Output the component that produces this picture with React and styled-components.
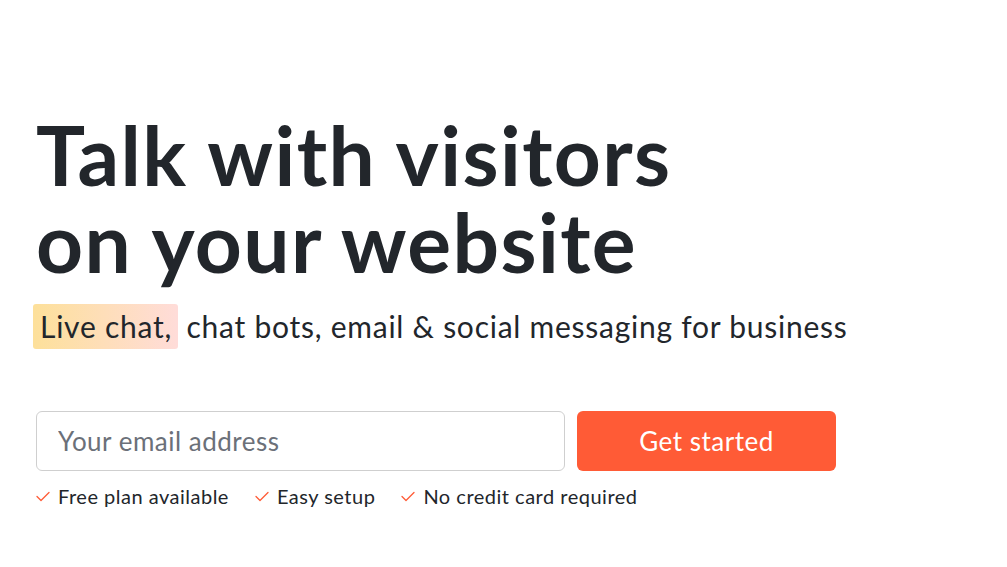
import React from "react";
import styled, { createGlobalStyle } from "styled-components";

const Global = createGlobalStyle`
  html, body { margin: 0; padding: 0; background: #fff; }
  body { font-family: "Lato", "Noto Sans", sans-serif; color: #22262b; }
`;

const Hero = styled.section`
  padding: 111px 0 0 36px;
  width: 940px;
`;

const Title = styled.h1`
  margin: 0;
  font-family: "Lato", sans-serif;
  font-weight: 700;
  font-size: 82px;
  letter-spacing: 1.4px;
  color: #22262b;
`;

const TitleLine = styled.span`
  display: block;
  height: 87px;
  line-height: 87px;
`;

const Subtitle = styled.p`
  margin: 19px 0 0 0;
  font-size: 30px;
  line-height: 45px;
  letter-spacing: 0.75px;
  color: #22262b;
  font-weight: 400;
`;

const Highlight = styled.span`
  display: inline-block;
  margin-left: -3px;
  padding: 0 6px 0 7px;
  border-radius: 3px;
  background: linear-gradient(90deg, #fde09a 0%, #ffdcd9 100%);
`;

const Form = styled.form`
  margin-top: 62px;
  display: flex;
  gap: 12px;
`;

const Input = styled.input`
  box-sizing: border-box;
  width: 529px;
  height: 60px;
  border: 1px solid #cfcfcf;
  border-radius: 6px;
  padding: 0 21px;
  font-family: "Lato", sans-serif;
  font-size: 26px;
  letter-spacing: 0.5px;
  color: #22262b;
  outline: none;
  &::placeholder { color: #6b7079; }
`;

const Button = styled.button`
  box-sizing: border-box;
  width: 259px;
  height: 60px;
  border: none;
  border-radius: 6px;
  background: #ff5b36;
  color: #fff;
  font-family: "Lato", sans-serif;
  font-size: 26px;
  letter-spacing: 0.5px;
  cursor: pointer;
`;

const Perks = styled.ul`
  list-style: none;
  margin: 13px 0 0 0;
  padding: 0;
  display: flex;
  gap: 26px;
`;

const Perk = styled.li`
  display: flex;
  align-items: center;
  gap: 8px;
  font-size: 20px;
  letter-spacing: 0.5px;
  color: #22262b;
`;

const Check = () => (
  <svg width="14" height="11" viewBox="0 0 14 11" fill="none">
    <path d="M1 5.5 L5 9.5 L13 1.5" stroke="#ff5b36" strokeWidth="1.3" strokeLinecap="round" strokeLinejoin="round" />
  </svg>
);

export default function App() {
  return (
    <>
      <Global />
      <Hero>
        <Title>
          <TitleLine>Talk with visitors</TitleLine>
          <TitleLine>on your website</TitleLine>
        </Title>
        <Subtitle>
          <Highlight>Live chat,</Highlight> chat bots, email &amp; social messaging for business
        </Subtitle>
        <Form onSubmit={(e) => e.preventDefault()}>
          <Input type="email" placeholder="Your email address" />
          <Button type="submit">Get started</Button>
        </Form>
        <Perks>
          {["Free plan available", "Easy setup", "No credit card required"].map((t) => (
            <Perk key={t}>
              <Check />
              {t}
            </Perk>
          ))}
        </Perks>
      </Hero>
    </>
  );
}
